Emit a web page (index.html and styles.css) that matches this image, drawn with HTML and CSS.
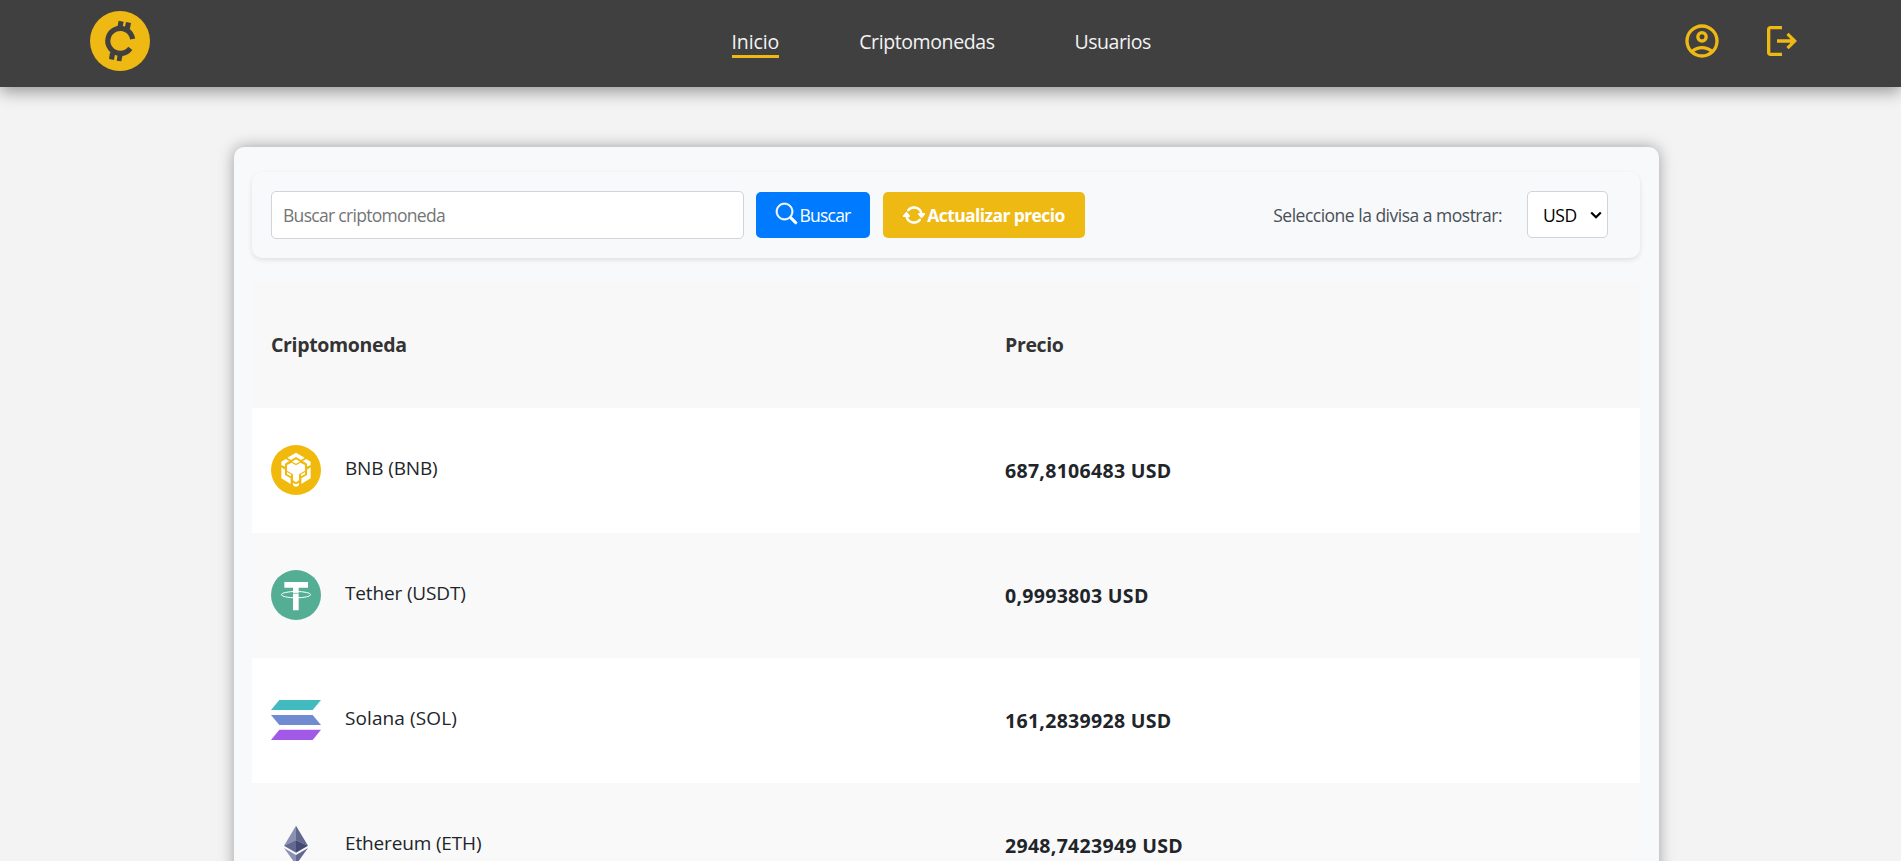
FILE: index.html
```html
<!DOCTYPE html>
<html lang="es">
<head>
<meta charset="utf-8">
<title>Criptomonedas</title>
<link rel="stylesheet" href="styles.css">
</head>
<body>
<header class="header">
  <svg class="logo" viewBox="0 0 180 180"><circle cx="90" cy="90" r="90" fill="#efb914"/><g fill="#404040"><path d="M86 29l15 3-4 20-15-3zM108 33l15 3-4 21-15-6zM60 124l15 5-3 18-15-3zM83 129l15 3-4 19-14-2z"/></g><path d="M128 84A37.500 37.500 0 1 0 121 112" fill="none" stroke="#404040" stroke-width="15.500"/></svg>
  <nav class="nav">
    <a class="link link-home active">Inicio</a>
    <a class="link">Criptomonedas</a>
    <a class="link link-users">Usuarios</a>
  </nav>
  <div class="actions">
    <svg viewBox="0 0 24 24"><path d="M5.85 17.1q1.275-.975 2.85-1.537T12 15t3.3.563t2.85 1.537q.875-1.025 1.363-2.325T20 12q0-3.325-2.337-5.663T12 4T6.337 6.338T4 12q0 1.475.488 2.775T5.85 17.1M12 13q-1.475 0-2.488-1.012T8.5 9.5t1.013-2.488T12 6t2.488 1.013T15.5 9.5t-1.012 2.488T12 13m0 9q-2.075 0-3.9-.788t-3.175-2.137T2.788 15.9T2 12t.788-3.9t2.137-3.175T8.1 2.788T12 2t3.9.788t3.175 2.137T21.213 8.1T22 12t-.788 3.9t-2.137 3.175t-3.175 2.138T12 22m0-2q1.325 0 2.5-.387t2.15-1.113q-.975-.725-2.15-1.112T12 17t-2.5.388T7.35 18.5q.975.725 2.15 1.113T12 20m0-9q.65 0 1.075-.425T13.5 9.5t-.425-1.075T12 8t-1.075.425T10.5 9.5t.425 1.075T12 11"/></svg>
    <svg viewBox="0 0 24 24"><path d="M5 21q-.825 0-1.412-.587T3 19V5q0-.825.588-1.412T5 3h7v2H5v14h7v2zm11-4l-1.375-1.45l2.55-2.55H9v-2h8.175l-2.55-2.55L16 7l5 5z"/></svg>
  </div>
</header>
<main class="card">
  <div class="toolbar">
    <input class="search" type="text" placeholder="Buscar criptomoneda">
    <button class="btn btn-search"><svg viewBox="0 0 16 16"><path d="M11.742 10.344a6.500 6.500 0 1 0-1.397 1.398h-.001q.044.060.098.115l3.850 3.850a1 1 0 0 0 1.415-1.414l-3.850-3.850a1 1 0 0 0-.115-.100zM12 6.500a5.500 5.500 0 1 1-11 0 5.500 5.500 0 0 1 11 0"/></svg><span>Buscar</span></button>
    <button class="btn btn-refresh"><svg viewBox="0 0 16 16"><path d="M11.534 7h3.932a.25.25 0 0 1 .192.410l-1.966 2.360a.25.25 0 0 1-.384 0l-1.966-2.360a.25.25 0 0 1 .192-.410m-11 2h3.932a.25.25 0 0 0 .192-.410L2.692 6.230a.25.25 0 0 0-.384 0L.342 8.590A.25.25 0 0 0 .534 9"/><path fill-rule="evenodd" d="M8 3c-1.552 0-2.940.707-3.857 1.818a.5.5 0 1 1-.771-.636A6.002 6.002 0 0 1 13.917 7H12.900A5 5 0 0 0 8 3M3.100 9a5.002 5.002 0 0 0 8.757 2.182.5.5 0 1 1 .771.636A6.002 6.002 0 0 1 2.083 9z"/></svg><span>Actualizar precio</span></button>
    <label class="label" for="divisa">Seleccione la divisa a mostrar:</label>
    <div class="select" id="divisa"><span>USD</span><svg viewBox="0 0 12 8"><path d="M1.200 1.500L6 6.200l4.800-4.700" fill="none" stroke="#000" stroke-width="2.200"/></svg></div>
  </div>
  <div class="table">
    <div class="row head"><div class="th">Criptomoneda</div><div class="th">Precio</div></div>
    <div class="row">
      <div class="coin"><svg viewBox="0 0 150 150"><circle cx="75" cy="75" r="75" fill="#f0b90b"/><path fill="#fff" d="M75 23l26 15-11 7-15-9-15 9-11-7zM75 43l12 7-12 6-12-6zM48 60l14-7 13 8 13-8 14 7v17l-18 11v18l-9 6-9-6V88L48 77zM31 50l13-8 11 6-13 8v9l-11-5zM119 50l-13-8-11 6 13 8v9l11-5zM31 67l11 7v16l17 10v17L31 100zM119 67l-11 7v16l-17 10v17l28-17zM48 81l12 7v6l-12-6zM102 81l-12 7v6l12-6zM66 113l9 5 9-5v8l-9 5-9-5z"/></svg><span>BNB (BNB)</span></div>
      <div class="price">687,8106483 USD</div>
    </div>
    <div class="row even">
      <div class="coin"><svg viewBox="0 0 150 150"><circle cx="75" cy="75" r="75" fill="#53ae94"/><path fill="#fff" d="M40 36h71v17H83v68H66V53H40z"/><ellipse cx="75" cy="74" rx="44" ry="9.500" fill="none" stroke="#fff" stroke-width="3"/><path d="M66 70h17" stroke="#53ae94" stroke-width="2"/></svg><span>Tether (USDT)</span></div>
      <div class="price">0,9993803 USD</div>
    </div>
    <div class="row">
      <div class="coin"><svg viewBox="0 0 150 150"><path fill="#42bbc0" d="M25 15h125l-25 30H0z"/><path fill="#718bd3" d="M0 60h125l25 30H25z"/><path fill="#a259e8" d="M25 104h125l-25 31H0z"/></svg><span class="wide">Solana (SOL)</span></div>
      <div class="price">161,2839928 USD</div>
    </div>
    <div class="row even">
      <div class="coin"><svg viewBox="0 0 150 150"><path fill="#8a92b2" d="M75 17L39 77l36-17z"/><path fill="#62688f" d="M75 17l36 60-36-17zM75 60L39 77l36 21z"/><path fill="#454a75" d="M75 60l36 17-36 21z"/><path fill="#8a92b2" d="M39 84l36 21v29z"/><path fill="#62688f" d="M111 84l-36 21v29z"/></svg><span>Ethereum (ETH)</span></div>
      <div class="price">2948,7423949 USD</div>
    </div>
  </div>
</main>
</body>
</html>
```
FILE: styles.css
```css
* { box-sizing: border-box; }
html { height: 100%; overflow: hidden; }
body {
  margin: 0;
  height: 100%;
  overflow: hidden;
  background: #f3f3f3;
  color: #212529;
  font-family: "Open Sans", "Noto Sans", sans-serif;
  font-size: 19.5px;
}
.header {
  height: 87px;
  padding: 0 99px 5px 90px;
  background: #404040;
  box-shadow: 0 5px 15px rgba(0, 0, 0, .37);
  display: grid;
  grid-template-columns: 641.5px 1fr auto;
  align-items: center;
}
.logo { width: 60px; height: 60px; }
.nav { display: flex; gap: 80px; padding-top: 4px; }
.link {
  color: #f3f3f3;
  font-size: 19.5px;
  line-height: 27px;
  letter-spacing: -.4px;
  border-bottom: 3px solid transparent;
  white-space: nowrap;
}
.link-home { letter-spacing: -.1px; }
.link-users { letter-spacing: -.5px; }
.active { border-color: #efb914; }
.actions { display: flex; gap: 40px; }
.actions svg { width: 40px; height: 40px; fill: #efb914; }
.card {
  width: 1425px;
  height: 900px;
  margin: 60px 0 0 234px;
  padding: 25px 19px 0 18px;
  background: #f8f9fb;
  border-radius: 10px;
  box-shadow: 0 0 15px rgba(0, 0, 0, .35);
}
.toolbar {
  height: 86px;
  padding: 0 32px 0 19px;
  display: flex;
  align-items: center;
  border-radius: 10px;
  box-shadow: 0 2px 5px rgba(0, 0, 0, .1);
  font-size: 17.5px;
}
.search {
  width: 473px;
  height: 48px;
  padding: 0 11px;
  border: 1px solid #ced4da;
  border-radius: 5px;
  background: #fff;
  font: 17.5px "Open Sans", sans-serif;
  letter-spacing: -.7px;
}
.search::placeholder { color: #757575; }
.btn {
  height: 46px;
  padding: 0;
  border: 0;
  border-radius: 5px;
  color: #fff;
  font: 17.5px "Open Sans", sans-serif;
  display: flex;
  align-items: center;
  justify-content: center;
  white-space: nowrap;
}
.btn svg { fill: #fff; stroke: #fff; stroke-width: .5; overflow: visible; }
.btn-search { width: 114px; margin-left: 12px; background: #007bff; gap: 3px; letter-spacing: -.8px; }
.btn-search svg { width: 21px; height: 21px; margin-bottom: 3px; }
.btn-refresh { width: 202px; margin-left: 13px; background: #efb914; gap: 2px; font-weight: 700; letter-spacing: -.6px; }
.btn-refresh svg { width: 22px; height: 22px; margin-bottom: 1px; stroke-width: .8; }
.label { margin-left: auto; color: #495057; letter-spacing: -.5px; white-space: nowrap; }
.select {
  width: 81px;
  height: 47px;
  margin: 0 0 1px 25px;
  padding: 0 5px 0 15px;
  border: 1px solid #ced4da;
  border-radius: 5px;
  background: #fff;
  color: #000;
  display: flex;
  align-items: center;
  justify-content: space-between;
  letter-spacing: -.4px;
}
.select svg { width: 12px; height: 8px; }
.table { margin-top: 24px; }
.row {
  height: 125px;
  padding: 0 0 1px 19px;
  background: #fff;
  display: grid;
  grid-template-columns: 734px 1fr;
  align-items: center;
}
.head { height: 126px; background: #f8f8f8; }
.even { background: #f9f9f9; }
.th { color: #333; font-weight: 700; letter-spacing: -.35px; }
.coin { display: flex; align-items: center; gap: 24px; font-size: 19px; letter-spacing: -.15px; }
.coin svg { width: 50px; height: 50px; }
.coin span { margin-bottom: 4px; }
.coin .wide { letter-spacing: .1px; }
.price { font-weight: 700; letter-spacing: .3px; }
```
